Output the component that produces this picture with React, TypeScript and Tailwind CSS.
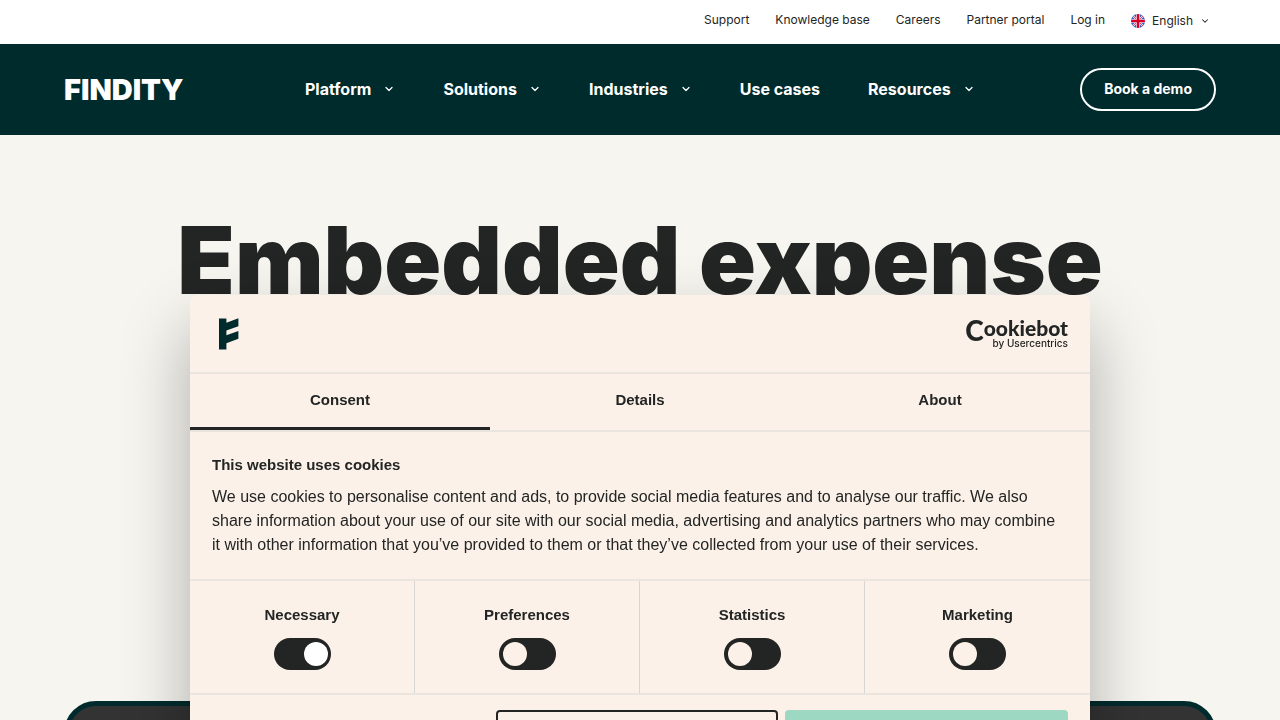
import { useState } from "react";
import { ChevronDown } from "lucide-react";

const topLinks = ["Support", "Knowledge base", "Careers", "Partner portal", "Log in"];

const mainLinks = [
  { label: "Platform", menu: true },
  { label: "Solutions", menu: true },
  { label: "Industries", menu: true },
  { label: "Use cases", menu: false },
  { label: "Resources", menu: true },
];

const tabs = ["Consent", "Details", "About"];

const categories = ["Necessary", "Preferences", "Statistics", "Marketing"];

const FlagIcon = () => (
  <svg viewBox="0 0 28 28" className="size-3.5" aria-hidden="true">
    <clipPath id="flag">
      <circle cx="14" cy="14" r="14" />
    </clipPath>
    <g clipPath="url(#flag)">
      <rect width="28" height="28" fill="#2a62c4" />
      <path d="M2 2l24 24M26 2L2 26" stroke="#f3e6ee" strokeWidth="4" />
      <path d="M2 2l24 24M26 2L2 26" stroke="#d80027" strokeWidth="1.4" />
      <path d="M14 0v28M0 14h28" stroke="#fff" strokeWidth="7.4" />
      <path d="M14 0v28M0 14h28" stroke="#d80027" strokeWidth="5" />
    </g>
  </svg>
);

const BrandMark = () => (
  <svg viewBox="0 0 20 32" className="h-8 w-5" fill="#002b2d" role="img" aria-label="Findity">
    <path d="M0 .5h7.400v4.200L19.400.3v7.900L7.400 12.600v4.700l12-4.400v7.900l-12 4.400V31.500H0z" />
  </svg>
);

const CookiebotLogo = () => (
  <svg viewBox="0 0 104 34" className="h-[34px] w-[104px]" fill="#232524" role="img" aria-label="Cookiebot by Usercentrics">
    <text x="103" y="24" textAnchor="end" fontFamily="Lato, sans-serif" fontWeight="900">
      <tspan fontSize="28">C</tspan>
      <tspan fontSize="21" dy="-5">ookiebot</tspan>
    </text>
    <text x="103" y="30" fontSize="10" textAnchor="end" fontFamily="Inter, sans-serif" fontWeight="500">
      by Usercentrics
    </text>
  </svg>
);

const TopBar = () => (
  <div className="flex h-11 items-center justify-end gap-[26px] bg-white pr-[70px] pb-1 text-xs text-[#232524]">
    {topLinks.map((label) => (
      <a key={label} href="#">
        {label}
      </a>
    ))}
    <button type="button" className="flex items-center pt-0.5">
      <FlagIcon />
      <span className="mx-[7px]">English</span>
      <ChevronDown className="size-2.5" strokeWidth={2.5} />
    </button>
  </div>
);

const Header = () => (
  <header className="flex items-center justify-between bg-[#002b2d] px-16 py-6 text-white">
    <a href="#" className="text-[29px] leading-8 font-black">
      FINDITY
    </a>
    <nav className="flex items-center gap-12 pb-0.5 pl-4 font-bold">
      {mainLinks.map(({ label, menu }) =>
        menu ? (
          <button key={label} type="button" className="flex items-center gap-3">
            {label}
            <ChevronDown className="size-3" strokeWidth={2.5} />
          </button>
        ) : (
          <a key={label} href="#">
            {label}
          </a>
        )
      )}
    </nav>
    <a href="#" className="rounded-full border-2 border-white px-[22px] pt-2 pb-2.5 text-sm leading-[21px] font-bold">
      Book a demo
    </a>
  </header>
);

const Hero = () => (
  <main className="px-16 pt-[73px]">
    <h1 className="text-center text-[94px] leading-[104px] font-black">Embedded expense</h1>
    <div className="mt-[389px] h-96 rounded-[32px] border-[5px] border-[#002b2d] bg-[#333]" />
  </main>
);

interface CategorySwitchProps {
  label: string;
  checked: boolean;
  disabled?: boolean;
  onChange: () => void;
}

const CategorySwitch: React.FC<CategorySwitchProps> = ({ label, checked, disabled, onChange }) => (
  <label className="flex flex-col items-center gap-3 border-r border-[#d6d6d6] pt-[23px] pb-[23px] font-bold last:border-r-0">
    <span className="leading-[22px]">{label}</span>
    <input type="checkbox" checked={checked} disabled={disabled} onChange={onChange} className="peer sr-only" />
    <span className="flex h-8 w-[57px] items-center rounded-full bg-[#232524] px-1 peer-checked:justify-end peer-checked:pr-[3px] peer-focus-visible:ring-2">
      <span className={checked ? "size-6 rounded-full bg-white" : "size-6 rounded-full bg-[#fbf1e8]"} />
    </span>
  </label>
);

const CookieDialog = () => {
  const [tab, setTab] = useState("Consent");
  const [accepted, setAccepted] = useState(["Necessary"]);

  const toggle = (name: string) =>
    setAccepted((prev) => (prev.includes(name) ? prev.filter((item) => item !== name) : [...prev, name]));

  return (
    <div
      role="dialog"
      aria-label="This website uses cookies"
      className="fixed inset-x-0 top-[295px] mx-auto max-w-[900px] rounded-t-lg bg-[#fbf1e8] font-['Liberation_Sans',sans-serif] text-[15px] text-[#232524] shadow-[0_32px_68px_rgba(0,0,0,0.3)]"
    >
      <div className="flex items-center justify-between border-b-2 border-[#e9e4de] pt-[22px] pr-[21px] pb-[21px] pl-[29px]">
        <BrandMark />
        <CookiebotLogo />
      </div>

      <div role="tablist" className="flex border-b-2 border-[#e9e4de]">
        {tabs.map((name) => (
          <button
            key={name}
            type="button"
            role="tab"
            aria-selected={tab === name}
            onClick={() => setTab(name)}
            className={
              tab === name
                ? "flex-1 border-b-3 border-[#232524] pt-[15px] pb-4 leading-[22px] font-bold"
                : "flex-1 border-b-3 border-transparent pt-[15px] pb-4 leading-[22px] font-bold"
            }
          >
            {name}
          </button>
        ))}
      </div>

      <div className="border-b-2 border-[#e9e4de] pt-[21px] pr-7 pb-[22px] pl-[22px] leading-6">
        <h2 className="mb-2 font-bold">This website uses cookies</h2>
        <p className="text-base leading-6">
          We use cookies to personalise content and ads, to provide social media features and to analyse our traffic. We also
          share information about your use of our site with our social media, advertising and analytics partners who may
          combine it with other information that you’ve provided to them or that they’ve collected from your use of their
          services.
        </p>
      </div>

      <div className="grid grid-cols-4 border-b-2 border-[#e9e4de]">
        {categories.map((name) => (
          <CategorySwitch
            key={name}
            label={name}
            checked={accepted.includes(name)}
            disabled={name === "Necessary"}
            onChange={() => toggle(name)}
          />
        ))}
      </div>

      <div className="flex justify-end gap-[7px] px-[22px] pt-[15px] pb-4 font-bold">
        <button type="button" className="h-14 w-[282px] rounded border-2 border-[#232524]">
          Customize
        </button>
        <button type="button" className="h-14 w-[283px] rounded bg-[#9dd8c3]">
          Allow all
        </button>
      </div>
    </div>
  );
};

export default function App() {
  return (
    <div className="h-screen overflow-hidden bg-[#f6f5f0] font-[Inter,sans-serif] text-[#232524]">
      <TopBar />
      <Header />
      <Hero />
      <CookieDialog />
    </div>
  );
}
